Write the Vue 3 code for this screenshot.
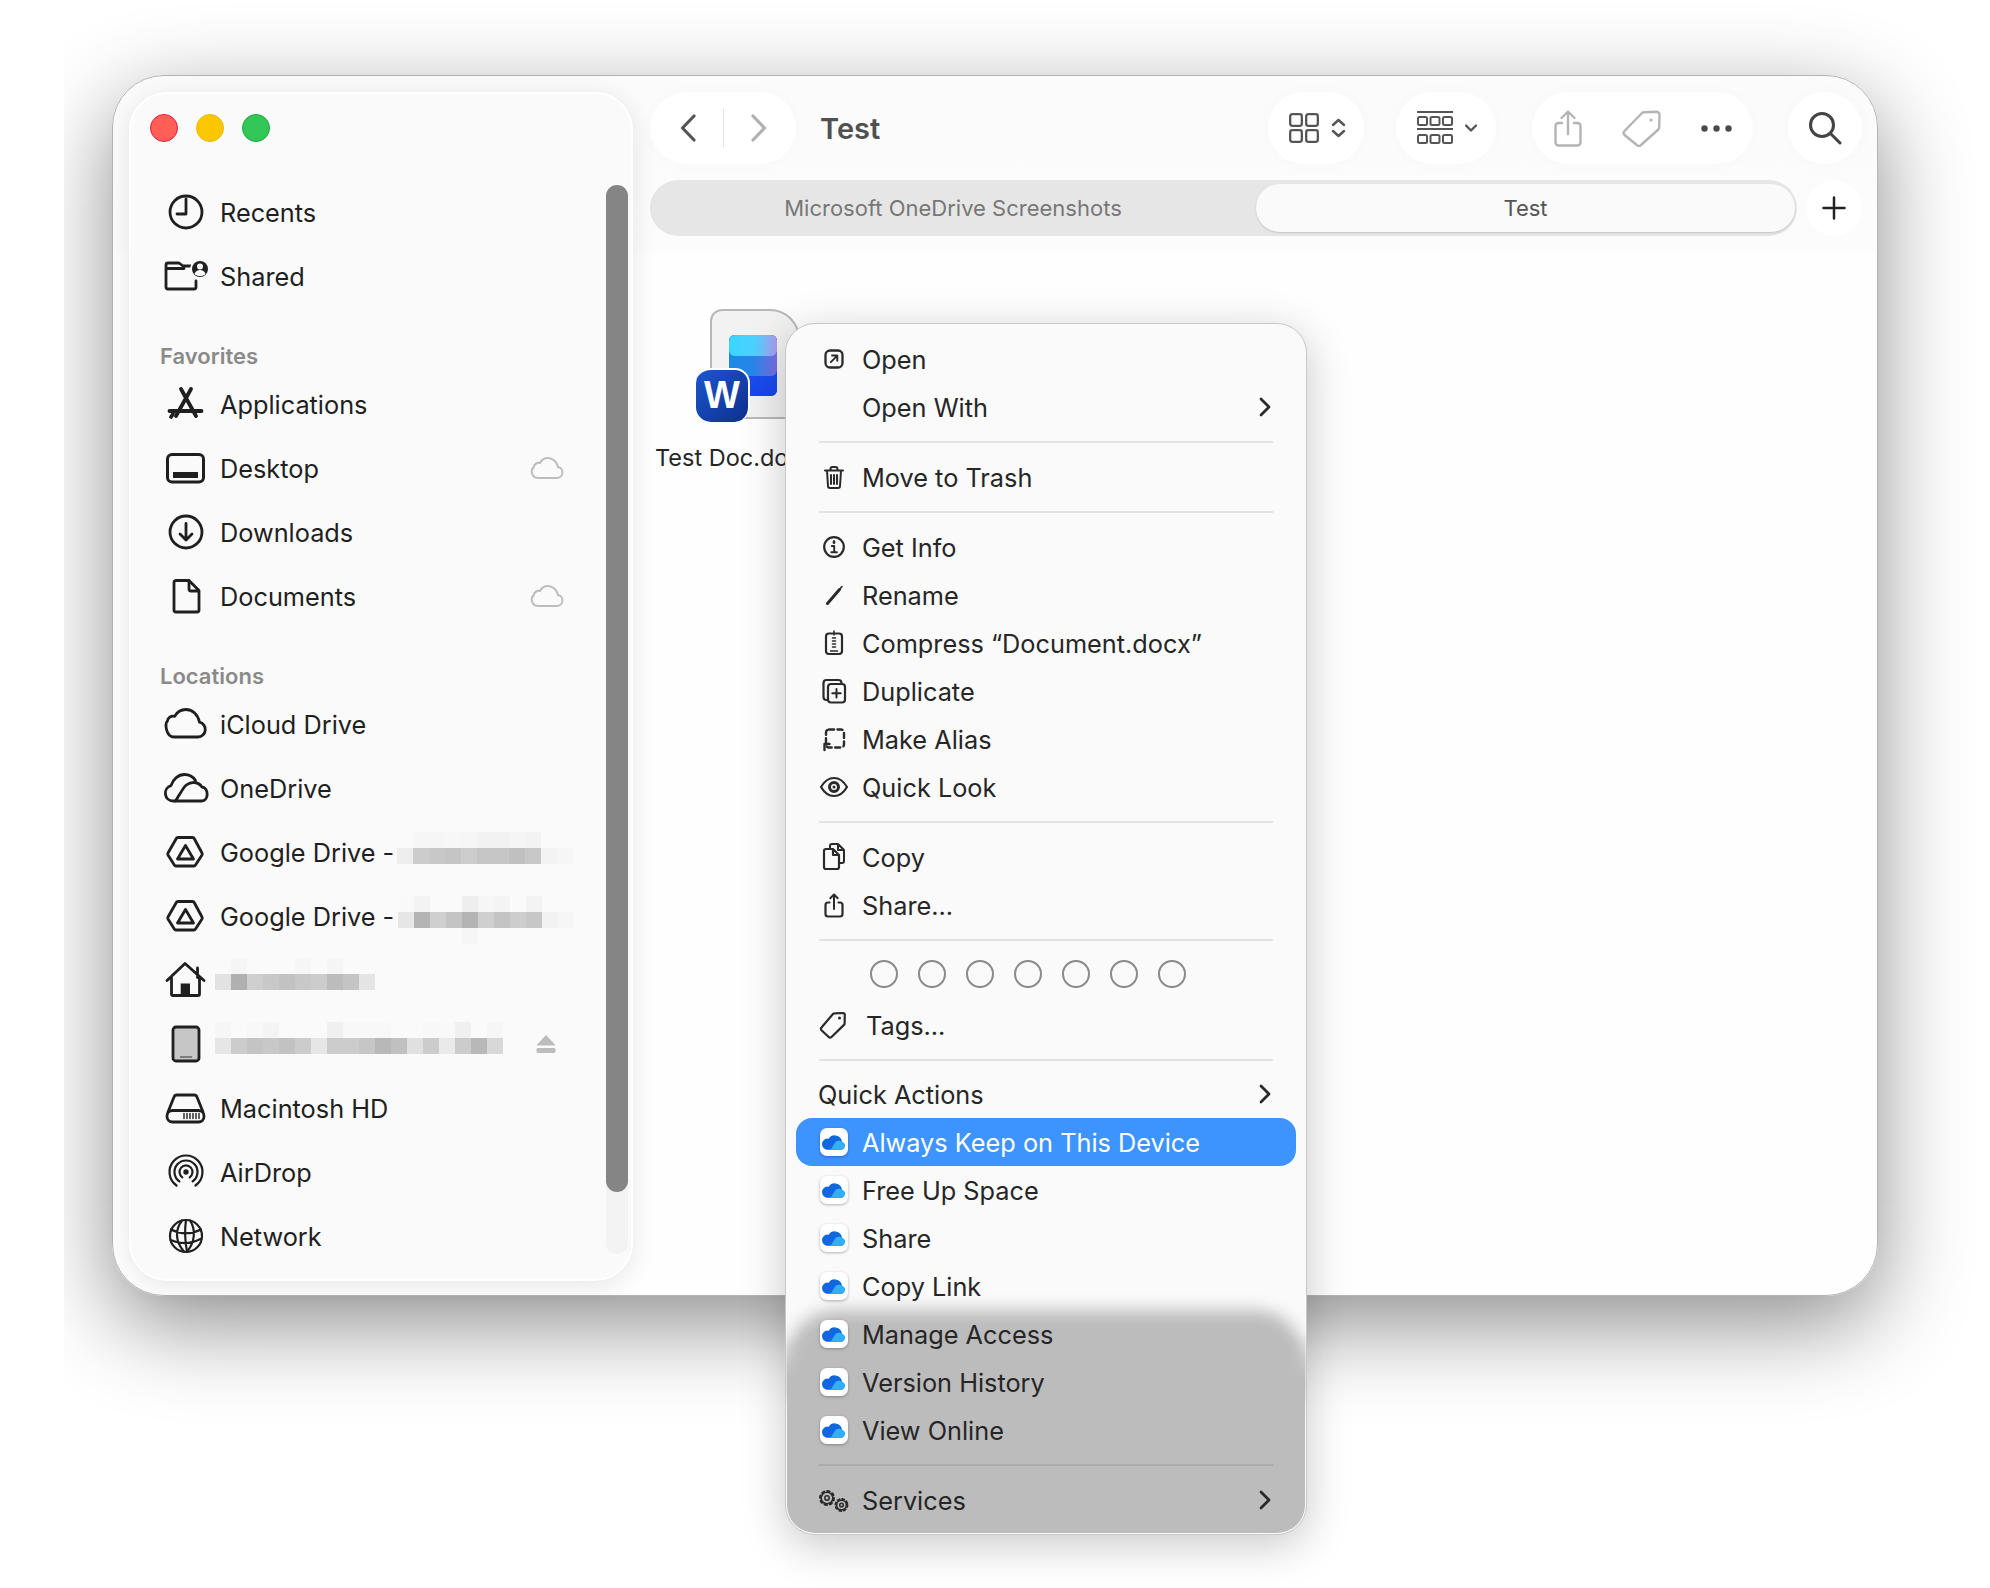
<script setup>
const g = {
  clock: '<circle cx="30" cy="24" r="16"/><path d="M30 11v15h-9"/>',
  shared: '<path d="M10 16v-3a2 2 0 0 1 2-2h11l4 3h9M10 16.500h18M10 14v21a2 2 0 0 0 2 2h26a2 2 0 0 0 2-2v-6"/><circle cx="44" cy="17" r="9" fill="#1f1f1f" stroke="#fafafa" stroke-width="2"/><circle cx="44" cy="14.500" r="3" fill="#fafafa" stroke="none"/><path d="M38.500 22c1-3 3-4 5.500-4s4.500 1 5.500 4c-1.500 1.500-3.500 2-5.500 2s-4-.5-5.500-2z" fill="#fafafa" stroke="none"/>',
  apps: '<g stroke-width="3.800"><path d="M25 9l15 27M35 9L20 36M13.500 31h32"/><path d="M15 37l2-3" /></g>',
  desktop: '<rect x="11.500" y="10.500" width="36" height="27.500" rx="4.500" stroke-width="3"/><rect x="17" y="28" width="25" height="6" fill="#1f1f1f" stroke="none"/>',
  download: '<circle cx="30" cy="24" r="16"/><path d="M30 15.500v16.500M24 26l6 6 6-6"/>',
  doc: '<path d="M20 8.500h13l10 10V38a2 2 0 0 1-2 2H20a2 2 0 0 1-2-2V10.500a2 2 0 0 1 2-2zM33 8.500V17a2 2 0 0 0 2 2h8"/>',
  icloud: '<path d="M18 37h24a7.500 7.500 0 0 0 1.500-14.800C42 14.500 36.500 9.500 30 9.500c-5 0-9 2.500-11.300 6.800-3.700-.8-7 1.500-7.500 5.200C8.500 23 10 37 18 37z"/>',
  onedrive: '<g transform="translate(1.500 0)"><path d="M18 37h-2.500a7.800 7.800 0 0 1-2-15.300C15.500 15 21 10.500 27 10.500c4.500 0 8.500 2.200 11 6"/><path d="M18 37c2-3 6-10 8.500-13.500 4-5.500 13-7.500 18-.5 7 1 7 14-.5 14z"/></g>',
  gdrive: '<path d="M22 9.500h14.500a2 2 0 0 1 1.700 1L46 25a2 2 0 0 1 0 2l-6.500 10a2 2 0 0 1-1.700 1H20a2 2 0 0 1-1.700-1L12 27a2 2 0 0 1 0-2l8.300-14.500a2 2 0 0 1 1.700-1z"/><path d="M29.500 17.500L37.500 31H21.500z"/>',
  home: '<path d="M11 24.500L29 7.500l19 17M41.500 12v9.500M15.500 21v17a1.500 1.500 0 0 0 1.500 1.500h25a1.500 1.500 0 0 0 1.500-1.500V21"/><rect x="24.700" y="27.500" width="9.300" height="12" fill="#1f1f1f" stroke="none"/>',
  device: '<rect x="17" y="7" width="26" height="34" rx="3" fill="#c6c6c6"/><path d="M24.500 37h11" stroke="#666" stroke-width="1.500"/>',
  hd: '<path d="M12 28l6-15a3 3 0 0 1 2.800-2h17.400a3 3 0 0 1 2.800 2l6 15"/><rect x="11" y="26.500" width="37" height="11.500" rx="5.500"/><path d="M28 29.500v5M31 29.500v5M34 29.500v5M37 29.500v5M40 29.500v5M43 29.500v5" stroke-width="1.400"/>',
  airdrop: '<g stroke-width="2.200"><path d="M20.500 37.500a16.500 16.500 0 1 1 19 0"/><path d="M23.400 33.400a11.500 11.500 0 1 1 13.200 0"/><path d="M26.300 29.300a6.500 6.500 0 1 1 7.400 0"/></g><circle cx="30" cy="24" r="2.700" fill="#1f1f1f" stroke="none"/>',
  globe: '<g stroke-width="2.200"><circle cx="30" cy="24" r="16"/><path d="M26 8.500c-7 9-7 21 2 31M34 8.500c6 9 5 22-3 31M30 8c-1.500 10-1 21 1 32M15 17.500c10 5 20 5 30 0M14.500 28c11 5 20 4 30-1"/></g>'
}

const m = {
  open: '<rect x="9.500" y="9.500" width="17" height="17" rx="4.500" stroke-width="2.300"/><path d="M14.800 21.200l6-6M16 14.500h5.300v5.300" stroke-width="1.900"/>',
  none: '',
  trash: '<path d="M9 11.500h18M14.500 11.500V10a2 2 0 0 1 2-2h3a2 2 0 0 1 2 2v1.500M11 11.500l1 15.500a2 2 0 0 0 2 2h8a2 2 0 0 0 2-2l1-15.500M15 16v9M18 16v9M21 16v9" stroke-width="2"/>',
  info: '<circle cx="18" cy="18" r="9.800" stroke-width="2.200"/><path d="M18 12.500v1.200" stroke-width="2.600"/><path d="M15.800 17h2.400v6M15.300 23.300h5.600" stroke-width="1.900"/>',
  rename: '<path d="M11.500 26.500l12-14" stroke-width="3"/><path d="M23.500 12.500l2.500-3" stroke-width="1.600"/>',
  compress: '<rect x="10" y="8.500" width="16" height="20.500" rx="3" stroke-width="2.200"/><path d="M18 6v4M16.500 13h3M16.500 16h3M16.500 19h3M16.500 22h3M14.500 26h7" stroke-width="1.500"/>',
  duplicate: '<path d="M11.500 27H10.500a3 3 0 0 1-3-3V10a3 3 0 0 1 3-3h12a3 3 0 0 1 3 3v1" stroke-width="2.200"/><rect x="12" y="11" width="17" height="18.500" rx="3" stroke-width="2.200"/><path d="M20.500 16v8.500M16.300 20.300h8.400" stroke-width="2"/>',
  alias: '<rect x="10" y="8.500" width="18" height="18" rx="3" stroke-width="2.400" stroke-dasharray="5 3.500"/><path d="M8.500 29v-6M8.500 23h5" stroke-width="2.400"/>',
  eye: '<path d="M5 18c3.500-6 8.500-9 13-9s9.500 3 13 9c-3.500 6-8.500 9-13 9s-9.500-3-13-9z" stroke-width="2.200"/><circle cx="18" cy="18" r="4.500" stroke-width="3"/><circle cx="18" cy="18" r="1.500" fill="#2a2a2a" stroke="none"/>',
  copy: '<path d="M14 9V7a2 2 0 0 1 2-2h6l6 6v11a2 2 0 0 1-2 2h-2M22 5v6h6" stroke-width="2"/><path d="M10 10h7l6 6v12a2 2 0 0 1-2 2H10a2 2 0 0 1-2-2V12a2 2 0 0 1 2-2zM17 10v6h6" stroke-width="2.200"/>',
  share: '<path d="M13.500 15.500H12a2.500 2.500 0 0 0-2.500 2.500v9a2.500 2.500 0 0 0 2.500 2.500h12a2.500 2.500 0 0 0 2.500-2.500v-9a2.500 2.500 0 0 0-2.500-2.500h-1.500" stroke-width="2.200"/><path d="M18 8v14M14.300 11.300L18 7.500l3.700 3.800" stroke-width="2"/>',
  tag: '<path d="M5.500 20.500L17 7a2 2 0 0 1 1.500-.7l8.300-.3a2 2 0 0 1 2 2l-.2 8.500a2 2 0 0 1-.6 1.400L15.500 30a2 2 0 0 1-2.800 0l-7.200-6.800a2 2 0 0 1 0-2.700z" stroke-width="2.200"/><circle cx="23.500" cy="11" r="1.500" fill="#2a2a2a" stroke="none"/>',
  gears: '<g stroke-width="1.500"><circle cx="11" cy="16" r="5.800"/><circle cx="11" cy="16" r="2.200"/><circle cx="11" cy="16" r="7" stroke-width="2" stroke-dasharray="2.400 3.100"/><circle cx="25.500" cy="23" r="4.800"/><circle cx="25.500" cy="23" r="1.800"/><circle cx="25.500" cy="23" r="6" stroke-width="1.900" stroke-dasharray="2.100 2.600"/></g>'
}

// pixelated name strips, one list of greys per row
const nameOne = [
  ['#fafafa', '#f6f6f6', '#f6f6f6', '#f7f7f7', '#f6f6f6', '#f2f2f2', '#f2f2f2', '#f5f5f5', '#f3f3f3', 'transparent', 'transparent'],
  ['#eeeeee', '#cccccc', '#c8c8c8', '#c5c5c5', '#cdcdcd', '#c6c6c6', '#c6c6c6', '#c0c0c0', '#c8c8c8', '#f3f3f3', '#f6f6f6']
]
const nameTwo = [
  ['#f9f9f9', '#f3f3f3', '#fafafa', '#fafafa', '#eeeeee', '#f6f6f6', '#f4f4f4', '#fafafa', '#f3f3f3', 'transparent', 'transparent'],
  ['#e6e6e6', '#b4b4b4', '#cfcfcf', '#c4c4c4', '#b4b4b4', '#cfcfcf', '#c4c4c4', '#cdcdcd', '#c7c7c7', '#f2f2f2', '#f6f6f6'],
  ['transparent', 'transparent', 'transparent', 'transparent', '#f6f6f6']
]
const nameHome = [
  ['transparent', '#f5f5f5', 'transparent', 'transparent', 'transparent', '#f6f6f6', 'transparent', '#f5f5f5'],
  ['#e2e2e2', '#b0b0b0', '#cfcfcf', '#c8c8c8', '#c2c2c2', '#c8c8c8', '#cccccc', '#bcbcbc', '#c4c4c4', '#e4e4e4']
]
const nameDevice = [
  ['#f6f6f6', 'transparent', '#f8f8f8', '#f4f4f4', 'transparent', 'transparent', 'transparent', '#f0f0f0', '#f8f8f8', '#f8f8f8', '#f8f8f8', 'transparent', '#fafafa', '#f8f8f8', '#f9f9f9', '#f0f0f0', 'transparent', '#f6f6f6'],
  ['#e6e6e6', '#cccccc', '#c4c4c4', '#c8c8c8', '#c2c2c2', '#cccccc', '#e6e6e6', '#cccccc', '#cccccc', '#c6c6c6', '#b8b8b8', '#c0c0c0', '#e0e0e0', '#cccccc', '#eaeaea', '#cccccc', '#b8b8b8', '#d8d8d8']
]

const sections = [
  {
    rows: [
      { icon: g.clock, label: 'Recents' },
      { icon: g.shared, label: 'Shared' }
    ]
  },
  {
    title: 'Favorites',
    rows: [
      { icon: g.apps, label: 'Applications' },
      { icon: g.desktop, label: 'Desktop', cloud: true },
      { icon: g.download, label: 'Downloads' },
      { icon: g.doc, label: 'Documents', cloud: true }
    ]
  },
  {
    title: 'Locations',
    rows: [
      { icon: g.icloud, label: 'iCloud Drive' },
      { icon: g.onedrive, label: 'OneDrive' },
      { icon: g.gdrive, label: 'Google Drive -', strip: nameOne, left: 266, top: 12 },
      { icon: g.gdrive, label: 'Google Drive -', strip: nameTwo, left: 267, top: 12 },
      { icon: g.home, label: '', strip: nameHome, left: 84, top: 10 },
      { icon: g.device, label: '', strip: nameDevice, left: 84, top: 10, eject: true },
      { icon: g.hd, label: 'Macintosh HD' },
      { icon: g.airdrop, label: 'AirDrop' },
      { icon: g.globe, label: 'Network' }
    ]
  }
]

const menuGroups = [
  [{ icon: m.open, label: 'Open' }, { icon: m.none, label: 'Open With', more: true }],
  [{ icon: m.trash, label: 'Move to Trash' }],
  [
    { icon: m.info, label: 'Get Info' },
    { icon: m.rename, label: 'Rename' },
    { icon: m.compress, label: 'Compress “Document.docx”' },
    { icon: m.duplicate, label: 'Duplicate' },
    { icon: m.alias, label: 'Make Alias' },
    { icon: m.eye, label: 'Quick Look' }
  ],
  [{ icon: m.copy, label: 'Copy' }, { icon: m.share, label: 'Share...' }]
]

const oneDriveItems = ['Always Keep on This Device', 'Free Up Space', 'Share', 'Copy Link', 'Manage Access', 'Version History', 'View Online']
const tagColors = 7
</script>

<template>
  <div class="stage">
    <div class="window">
      <aside class="sidebar">
        <div class="lights">
          <span class="light red"></span>
          <span class="light yellow"></span>
          <span class="light green"></span>
        </div>

        <section v-for="(sec, i) in sections" :key="i" class="side-section">
          <h4 v-if="sec.title">{{ sec.title }}</h4>
          <div v-for="(row, r) in sec.rows" :key="r" class="side-row">
            <svg class="side-icon" viewBox="0 0 60 48" fill="none" stroke="#1f1f1f" stroke-width="2.800" stroke-linecap="round" stroke-linejoin="round" v-html="row.icon"></svg>
            <span class="side-label">{{ row.label }}</span>
            <div v-if="row.strip" class="strip" :style="{ left: row.left + 'px', top: row.top + 'px' }">
              <div v-for="(line, l) in row.strip" :key="l" class="strip-line">
                <span v-for="(shade, c) in line" :key="c" class="cell" :style="{ background: shade }"></span>
              </div>
            </div>
            <svg v-if="row.cloud" class="side-cloud" viewBox="0 0 34 24" fill="none" stroke="#bcbcbc" stroke-width="2" stroke-linejoin="round">
              <path d="M8 22h19a5.500 5.500 0 0 0 1-10.900C27 5.500 22.500 2 18 2c-3.500 0-6.500 2-8 5-3.500-.7-6 1.500-6.300 4.500C.5 13 1 22 8 22z" />
            </svg>
            <svg v-if="row.eject" class="side-eject" viewBox="0 0 20 20" fill="#bdbdbd">
              <path d="M10 1l9 9.500a.6.6 0 0 1-.4 1H1.400a.6.6 0 0 1-.4-1z" />
              <rect x="0.500" y="14" width="19" height="5" rx="1.500" />
            </svg>
          </div>
        </section>

        <div class="scroll-track"><div class="scroll-thumb"></div></div>
      </aside>

      <main class="main">
        <header class="toolbar">
          <div class="pill nav-pill">
            <svg width="16" height="28" viewBox="0 0 16 28" fill="none" stroke="#555" stroke-width="3.200" stroke-linecap="round" stroke-linejoin="round"><path d="M14 2L2.500 14 14 26" /></svg>
            <span class="nav-divider"></span>
            <svg width="16" height="28" viewBox="0 0 16 28" fill="none" stroke="#b0b0b0" stroke-width="3.200" stroke-linecap="round" stroke-linejoin="round"><path d="M2 2l11.500 12L2 26" /></svg>
          </div>
          <h1 class="title">Test</h1>
          <div class="pill view-pill">
            <svg width="30" height="30" viewBox="0 0 30 30" fill="none" stroke="#555" stroke-width="2.300">
              <rect x="1.200" y="1.200" width="11.600" height="11.600" rx="2" />
              <rect x="17.200" y="1.200" width="11.600" height="11.600" rx="2" />
              <rect x="1.200" y="17.200" width="11.600" height="11.600" rx="2" />
              <rect x="17.200" y="17.200" width="11.600" height="11.600" rx="2" />
            </svg>
            <svg width="15" height="20" viewBox="0 0 15 20" fill="none" stroke="#555" stroke-width="2.400" stroke-linecap="round" stroke-linejoin="round"><path d="M2 7l5.500-5L13 7M2 13l5.500 5 5.500-5" /></svg>
          </div>
          <div class="pill group-pill">
            <svg width="36" height="34" viewBox="0 0 36 34" fill="none" stroke="#555" stroke-width="2">
              <path d="M0 1h36M0 18h36" stroke-width="2.200" />
              <rect x="1" y="6" width="9" height="8" rx="1.500" /><rect x="13.500" y="6" width="9" height="8" rx="1.500" /><rect x="26" y="6" width="9" height="8" rx="1.500" />
              <rect x="1" y="24" width="9" height="8" rx="1.500" /><rect x="13.500" y="24" width="9" height="8" rx="1.500" /><rect x="26" y="24" width="9" height="8" rx="1.500" />
            </svg>
            <svg width="12" height="8" viewBox="0 0 12 8" fill="none" stroke="#555" stroke-width="2.300" stroke-linecap="round" stroke-linejoin="round"><path d="M1 1.500l5 5 5-5" /></svg>
          </div>
          <div class="pill action-pill">
            <svg width="28" height="37" viewBox="0 0 28 37" fill="none" stroke="#b4b4b4" stroke-width="2.400" stroke-linecap="round" stroke-linejoin="round">
              <path d="M8 13H4.500A3 3 0 0 0 1.500 16v16.500a3 3 0 0 0 3 3h19a3 3 0 0 0 3-3V16a3 3 0 0 0-3-3H20" />
              <path d="M14 24V2M7.500 8L14 1.500 20.500 8" />
            </svg>
            <svg width="39" height="37" viewBox="0 0 39 37" fill="none" stroke="#b4b4b4" stroke-width="2.400" stroke-linejoin="round">
              <path d="M2.500 21L20 3a3 3 0 0 1 2-.8l12.500-.4a3 3 0 0 1 3 3l-.3 12.700a3 3 0 0 1-.9 2L19 35a3 3 0 0 1-4.200 0L2.500 25a3 3 0 0 1 0-4z" />
              <circle cx="29" cy="10" r="1.600" fill="#b4b4b4" stroke="none" />
            </svg>
            <svg width="31" height="7" viewBox="0 0 31 7" fill="#4a4a4a"><circle cx="3.500" cy="3.500" r="3.200" /><circle cx="15.500" cy="3.500" r="3.200" /><circle cx="27.500" cy="3.500" r="3.200" /></svg>
          </div>
          <div class="pill search-pill">
            <svg width="34" height="34" viewBox="0 0 34 34" fill="none" stroke="#444" stroke-width="3" stroke-linecap="round"><circle cx="14" cy="14" r="11.500" /><path d="M22.500 22.500L32 32" /></svg>
          </div>
        </header>

        <div class="tabs-row">
          <div class="tabs">
            <div class="tab">Microsoft OneDrive Screenshots</div>
            <div class="tab tab-active">Test</div>
          </div>
          <div class="plus">
            <svg width="24" height="24" viewBox="0 0 24 24" fill="none" stroke="#222" stroke-width="2.500" stroke-linecap="round"><path d="M12 1.500v21M1.500 12h21" /></svg>
          </div>
        </div>

        <div class="files">
          <div class="file">
            <div class="paper">
              <div class="layers">
                <span class="layer layer-bottom"></span>
                <span class="layer layer-mid"></span>
                <span class="layer layer-top"></span>
              </div>
              <div class="word-tile">W</div>
            </div>
            <div class="file-name">Test Doc.docx</div>
          </div>
        </div>
      </main>

      <!-- context menu -->
      <div class="menu">
        <div class="menu-shade">
          <div class="shade-top"></div>
          <div class="shade-fill"></div>
        </div>

        <template v-for="(group, i) in menuGroups" :key="i">
          <div v-for="item in group" :key="item.label" class="menu-row">
            <svg class="menu-icon" viewBox="0 0 36 36" fill="none" stroke="#2a2a2a" stroke-linecap="round" stroke-linejoin="round" v-html="item.icon"></svg>
            <span>{{ item.label }}</span>
            <svg v-if="item.more" class="menu-chevron" viewBox="0 0 12 20" fill="none" stroke="#2a2a2a" stroke-width="2.800" stroke-linecap="round" stroke-linejoin="round"><path d="M2 2l8 8-8 8" /></svg>
          </div>
          <div class="menu-sep"></div>
        </template>

        <div class="tag-dots">
          <span v-for="n in tagColors" :key="n" class="tag-dot"></span>
        </div>
        <div class="menu-row">
          <svg class="menu-icon" viewBox="0 0 36 36" fill="none" stroke="#2a2a2a" stroke-linecap="round" stroke-linejoin="round" v-html="m.tag"></svg>
          <span class="tags-label">Tags...</span>
        </div>
        <div class="menu-sep"></div>

        <div class="menu-row plain-row">
          <span>Quick Actions</span>
          <svg class="menu-chevron" viewBox="0 0 12 20" fill="none" stroke="#2a2a2a" stroke-width="2.800" stroke-linecap="round" stroke-linejoin="round"><path d="M2 2l8 8-8 8" /></svg>
        </div>
        <div v-for="(label, i) in oneDriveItems" :key="label" class="menu-row" :class="{ selected: i === 0 }">
          <div class="menu-icon od-box">
            <div class="od-tile">
              <svg width="28" height="28" viewBox="0 0 28 28">
                <path d="M6.500 21.800h14.500a4 4 0 0 0 1-7.800A7.200 7.200 0 0 0 8.800 10.700a5.200 5.200 0 0 0-2.300 11.100z" fill="#0f68e0" />
                <path d="M10.500 21.800l5-7.800c2-2 4.700-1.500 6.500 0a4 4 0 0 1-1 7.800z" fill="#2fb0f8" />
              </svg>
            </div>
          </div>
          <span>{{ label }}</span>
        </div>
        <div class="menu-sep"></div>

        <div class="menu-row">
          <svg class="menu-icon" viewBox="0 0 36 36" fill="none" stroke="#2a2a2a" stroke-linecap="round" stroke-linejoin="round" v-html="m.gears"></svg>
          <span>Services</span>
          <svg class="menu-chevron" viewBox="0 0 12 20" fill="none" stroke="#2a2a2a" stroke-width="2.800" stroke-linecap="round" stroke-linejoin="round"><path d="M2 2l8 8-8 8" /></svg>
        </div>
      </div>
    </div>
  </div>
</template>

<style>
html, body {
  background: #ffffff;
}
</style>

<style scoped>
.stage {
  height: 1588px;
  margin-left: 64px;
  padding: 75px 0 0 48px;
  box-sizing: border-box;
  overflow: hidden;
  font-family: Inter, "Liberation Sans", sans-serif;
  color: #1f1f1f;
}

.window {
  position: relative;
  display: flex;
  box-sizing: border-box;
  width: 1766px;
  height: 1221px;
  padding: 16px 15px 14px 16px;
  background: linear-gradient(180deg, #fbfbfb 0, #fcfcfc 176px, #fefefe 177px);
  border: 1px solid #b4b4b4;
  border-radius: 52px;
  box-shadow: 0 28px 90px rgba(0, 0, 0, 0.45);
}

/* sidebar */
.sidebar {
  position: relative;
  flex: none;
  box-sizing: border-box;
  width: 504px;
  height: 1189px;
  background: #fafafa;
  border: 2px solid #ffffff;
  border-radius: 38px;
  box-shadow: 0 4px 26px rgba(0, 0, 0, 0.1);
}

.lights {
  display: flex;
  gap: 18px;
  height: 86px;
  padding: 20px 0 0 19px;
  box-sizing: border-box;
}

.light {
  width: 28px;
  height: 28px;
  border-radius: 50%;
  box-sizing: border-box;
}
.red { background: #ff5f57; border: 1px solid #e8203a; }
.yellow { background: #fcc600; border: 1px solid #eeb800; }
.green { background: #33c758; border: 1px solid #12ad3a; }

.side-section h4 {
  margin: 30px 0 0 29px;
  height: 34px;
  line-height: 36px;
  font-size: 22px;
  font-weight: 600;
  color: #8a8a8a;
}

.side-row {
  position: relative;
  display: flex;
  align-items: center;
  height: 64px;
  padding: 0 67px 0 25px;
}

.side-icon {
  flex: none;
  width: 60px;
  height: 48px;
}

.side-label {
  margin-left: 4px;
  font-size: 25.300px;
}

.side-cloud {
  width: 34px;
  height: 24px;
  margin-left: auto;
}

.side-eject {
  width: 20px;
  height: 20px;
  margin-left: auto;
  margin-right: 8px;
}

.strip {
  position: absolute;
}

.strip-line {
  display: flex;
}

.cell {
  width: 16px;
  height: 16px;
}

.scroll-track {
  position: absolute;
  top: 91px;
  right: 3px;
  width: 22px;
  height: 1069px;
  background: #f3f3f3;
  border-radius: 11px;
}

.scroll-thumb {
  height: 1007px;
  background: #858585;
  border-radius: 11px;
}

/* toolbar */
.main {
  flex: 1;
  min-width: 0;
  margin-left: 17px;
  display: flex;
  flex-direction: column;
}

.toolbar {
  display: flex;
  align-items: center;
  height: 72px;
}

.pill {
  display: flex;
  align-items: center;
  box-sizing: border-box;
  height: 72px;
  background: #ffffff;
  border-radius: 36px;
  box-shadow: 0 0 18px rgba(0, 0, 0, 0.02);
}

.nav-pill {
  width: 146px;
  padding-left: 30px;
  gap: 27px;
}

.nav-divider {
  width: 1px;
  height: 40px;
  background: #e6e6e6;
}

.title {
  flex: 1;
  margin: 0 0 0 24px;
  font-size: 29px;
  font-weight: 600;
  color: #505050;
}

.view-pill {
  width: 96px;
  padding-left: 21px;
  gap: 12px;
  margin-right: 32px;
}

.group-pill {
  width: 100px;
  padding-left: 21px;
  gap: 12px;
  margin-right: 36px;
}

.action-pill {
  width: 221px;
  padding-left: 22px;
  gap: 40px;
  margin-right: 35px;
}

.search-pill {
  width: 74px;
  justify-content: center;
}

/* tabs */
.tabs-row {
  display: flex;
  gap: 9px;
  margin-top: 16px;
  height: 56px;
}

.tabs {
  flex: 1;
  display: flex;
  align-items: center;
  background: #e6e6e6;
  border-radius: 28px;
  padding-right: 2px;
}

.tab {
  flex: none;
  width: 606px;
  text-align: center;
  font-size: 22px;
  color: #777777;
}

.tab-active {
  flex: 1;
  width: auto;
  height: 48px;
  line-height: 48px;
  background: #fafafa;
  border-radius: 24px;
  color: #555555;
  box-shadow: 0 1px 2px rgba(0, 0, 0, 0.15);
}

.plus {
  flex: none;
  width: 56px;
  display: flex;
  align-items: center;
  justify-content: center;
  background: #ffffff;
  border-radius: 28px;
}

/* files */
.files {
  padding: 73px 0 0 5px;
}

.file {
  width: 180px;
}

.paper {
  position: relative;
  box-sizing: border-box;
  width: 90px;
  height: 110px;
  margin-left: 55px;
  background: #f2f2f2;
  border: 2px solid #b8b8b8;
  border-radius: 12px 30px 4px 4px;
}

.layers {
  position: absolute;
  left: 17px;
  top: 24px;
  width: 48px;
  height: 61px;
  border-radius: 6px;
  overflow: hidden;
  background: #1a50ee;
}

.layer {
  position: absolute;
  left: 0;
  width: 100%;
}

.layer-top {
  top: 0;
  height: 21px;
  border-radius: 0 0 6px 6px;
  background: linear-gradient(90deg, #38d6ff 0%, #4fd0ff 55%, #b09cf0 100%);
}

.layer-mid {
  top: 0;
  height: 41px;
  border-radius: 0 0 6px 6px;
  background: linear-gradient(90deg, #1a8ae6 0%, #2886ea 50%, #7a6ee6 100%);
}

.layer-bottom {
  top: 0;
  height: 61px;
  background: linear-gradient(180deg, #1a60ee, #1a44ee);
}

.word-tile {
  position: absolute;
  left: -16px;
  top: 57px;
  box-sizing: border-box;
  width: 54px;
  height: 54px;
  border-radius: 15px;
  border-top: 2px solid #ffffff;
  border-right: 2px solid #ffffff;
  background: linear-gradient(135deg, #1c57cc, #0e2f90);
  color: #ffffff;
  font-family: "Liberation Sans", Arial, sans-serif;
  font-size: 38px;
  font-weight: 700;
  line-height: 50px;
  text-align: center;
}

.file-name {
  margin-top: 24px;
  font-size: 23.500px;
  white-space: nowrap;
  color: #262626;
}

/* context menu */
.menu {
  position: absolute;
  left: 672px;
  top: 247px;
  box-sizing: border-box;
  width: 522px;
  height: 1212px;
  padding: 11px 10px;
  background: #fafafa;
  border: 1px solid #c8c8c8;
  border-radius: 30px;
  box-shadow: 0 10px 44px rgba(0, 0, 0, 0.22);
  color: #262626;
  font-size: 25.300px;
  overflow: hidden;
}

.menu-shade {
  position: absolute;
  inset: 960px 0 0 0;
  overflow: hidden;
}

.shade-top {
  position: absolute;
  left: 1px;
  right: 1px;
  top: 26px;
  height: 90px;
  background: #bcbcbc;
  border-radius: 50px 50px 0 0;
  filter: blur(8px);
}

.shade-fill {
  position: absolute;
  left: 1px;
  right: 1px;
  top: 50px;
  bottom: 1px;
  background: linear-gradient(180deg, rgba(188, 188, 188, 0) 0, #bcbcbc 45px);
  border-radius: 0 0 28px 28px;
}

.menu-row {
  position: relative;
  display: flex;
  align-items: center;
  height: 48px;
  padding: 0 25px 0 20px;
  border-radius: 16px;
}

.plain-row {
  margin-top: -1px;
  padding-left: 22px;
}

.menu-icon {
  flex: none;
  width: 36px;
  height: 36px;
  margin-right: 10px;
}

.tags-label {
  margin-left: 4px;
}

.menu-chevron {
  width: 12px;
  height: 20px;
  margin-left: auto;
}

.menu-sep {
  position: relative;
  height: 2px;
  margin: 10px 23px;
  background: rgba(0, 0, 0, 0.09);
}

.tag-dots {
  position: relative;
  display: flex;
  gap: 20px;
  height: 46px;
  align-items: center;
  padding-left: 74px;
  margin-bottom: 4px;
}

.tag-dot {
  box-sizing: border-box;
  width: 28px;
  height: 28px;
  border: 2px solid #8a8a8a;
  border-radius: 50%;
}

.selected {
  background: #3d94ff;
  color: #ffffff;
}

.od-box {
  display: flex;
  align-items: center;
  justify-content: center;
}

.od-tile {
  width: 28px;
  height: 28px;
  background: #ffffff;
  border-radius: 7px;
  box-shadow: 0 1px 3px rgba(0, 0, 0, 0.3);
}
</style>
